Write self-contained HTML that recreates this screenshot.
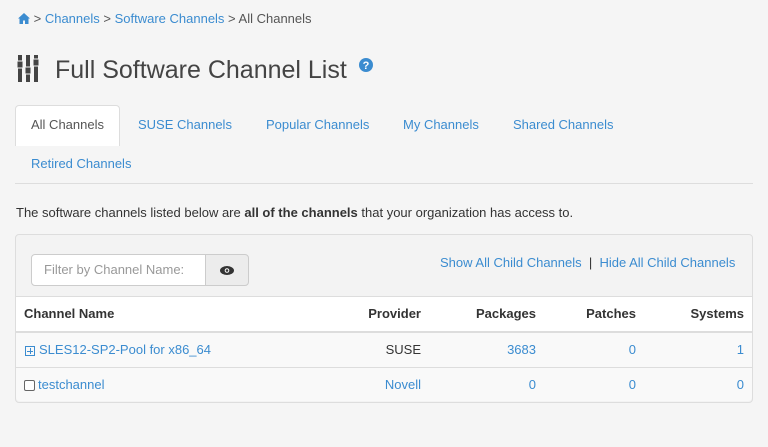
<html><head><style>
body{margin:0;background:#f5f5f5;font-family:"Liberation Sans",sans-serif;font-size:13px;color:#333;width:768px;height:447px;overflow:hidden;position:relative}
a{color:#3b8cd0;text-decoration:none}
.abs{position:absolute}
.tab{position:absolute;color:#3b8cd0;font-size:13px}
</style></head><body>
<div class="abs" style="left:18px;top:11px;font-size:13px;color:#555">
<svg width="12" height="11" viewBox="0 0 12 11" style="vertical-align:-1px"><path d="M6 0L0 5.5h1.5V11h3.5V7.5h2V11h3.5V5.5H12z" fill="#3b8cd0"/></svg> &gt; <a>Channels</a> &gt; <a>Software Channels</a> &gt; All Channels</div>
<svg class="abs" style="left:17px;top:55px" width="22" height="27" viewBox="0 0 22 27" fill="#444">
<rect x="1" y="0" width="4" height="27"/><rect x="0" y="6" width="6" height="7" stroke="#f5f5f5" stroke-width="1"/>
<rect x="9" y="0" width="4" height="27"/><rect x="8" y="12" width="6" height="7" stroke="#f5f5f5" stroke-width="1"/>
<rect x="17" y="0" width="4" height="27"/><rect x="16" y="4" width="6" height="7" stroke="#f5f5f5" stroke-width="1"/></svg>
<div class="abs" style="left:55px;top:56px;font-size:25px;color:#444">Full Software Channel List</div>
<svg class="abs" style="left:359px;top:58px" width="14" height="14" viewBox="0 0 14 14"><circle cx="7" cy="7" r="7" fill="#3b8cd0"/><text x="7" y="11" font-size="11" font-weight="bold" fill="#fff" text-anchor="middle" font-family="Liberation Sans">?</text></svg>
<div class="abs" style="left:15px;top:105px;width:103px;height:40px;background:#fff;border:1px solid #ddd;border-bottom:none;border-radius:4px 4px 0 0"></div>
<div class="tab" style="left:31px;top:117px;color:#555">All Channels</div>
<div class="tab" style="left:138px;top:117px">SUSE Channels</div>
<div class="tab" style="left:266px;top:117px">Popular Channels</div>
<div class="tab" style="left:403px;top:117px">My Channels</div>
<div class="tab" style="left:513px;top:117px">Shared Channels</div>
<div class="tab" style="left:31px;top:156px">Retired Channels</div>
<div class="abs" style="left:15px;top:183px;width:738px;height:1px;background:#ddd"></div>
<div class="abs" style="left:16px;top:205px">The software channels listed below are <b>all of the channels</b> that your organization has access to.</div>
<div class="abs" style="left:15px;top:234px;width:736px;height:167px;border:1px solid #ddd;border-radius:4px;background:#f3f3f3"></div>
<div class="abs" style="left:31px;top:254px;border:1px solid #ccc;border-radius:4px 0 0 4px;background:#fff;color:#999;line-height:30px;padding-left:12px;box-sizing:border-box;width:175px;height:32px">Filter by Channel Name:</div>
<div class="abs" style="left:205px;top:254px;width:44px;height:32px;border:1px solid #ccc;border-radius:0 4px 4px 0;background:#ececec;box-sizing:border-box"><svg style="position:absolute;left:14px;top:11px" width="14" height="9" viewBox="0 0 14 9"><ellipse cx="7" cy="4.5" rx="7" ry="4.5" fill="#333"/><circle cx="7" cy="4.5" r="2.3" fill="#fff"/><circle cx="7" cy="4.5" r="1.3" fill="#333"/></svg></div>
<div class="abs" style="left:440px;top:255px"><a>Show All Child Channels</a> &nbsp;|&nbsp; <a>Hide All Child Channels</a></div>
<div class="abs" style="left:16px;top:296px;width:736px;height:34px;background:#fff;border-top:1px solid #ddd;border-bottom:2px solid #ddd"></div>
<div class="abs" style="left:16px;top:333px;width:736px;height:34px;background:#f9f9f9;border-bottom:1px solid #ddd"></div>
<div class="abs" style="left:16px;top:368px;width:736px;height:33px;background:#f9f9f9;border-radius:0 0 4px 4px"></div>
<div class="abs" style="left:24px;top:306px;font-weight:bold">Channel Name</div>
<div class="abs" style="right:347px;top:306px;font-weight:bold">Provider</div>
<div class="abs" style="right:232px;top:306px;font-weight:bold">Packages</div>
<div class="abs" style="right:132px;top:306px;font-weight:bold">Patches</div>
<div class="abs" style="right:24px;top:306px;font-weight:bold">Systems</div>
<div class="abs" style="left:25px;top:346px;width:8px;height:8px;border:1px solid #3b8cd0"><div style="position:absolute;left:1px;top:3.5px;width:6px;height:1px;background:#3b8cd0"></div><div style="position:absolute;left:3.5px;top:1px;width:1px;height:6px;background:#3b8cd0"></div></div>
<div class="abs" style="left:39px;top:342px"><a>SLES12-SP2-Pool for x86_64</a></div>
<div class="abs" style="right:347px;top:342px">SUSE</div>
<div class="abs" style="right:232px;top:342px"><a>3683</a></div>
<div class="abs" style="right:132px;top:342px"><a>0</a></div>
<div class="abs" style="right:24px;top:342px"><a>1</a></div>
<div class="abs" style="left:24px;top:380px;width:9px;height:9px;border:1px solid #666;border-radius:2px;background:#fff"></div>
<div class="abs" style="left:38px;top:377px"><a>testchannel</a></div>
<div class="abs" style="right:347px;top:377px"><a>Novell</a></div>
<div class="abs" style="right:232px;top:377px"><a>0</a></div>
<div class="abs" style="right:132px;top:377px"><a>0</a></div>
<div class="abs" style="right:24px;top:377px"><a>0</a></div>
</body></html>
